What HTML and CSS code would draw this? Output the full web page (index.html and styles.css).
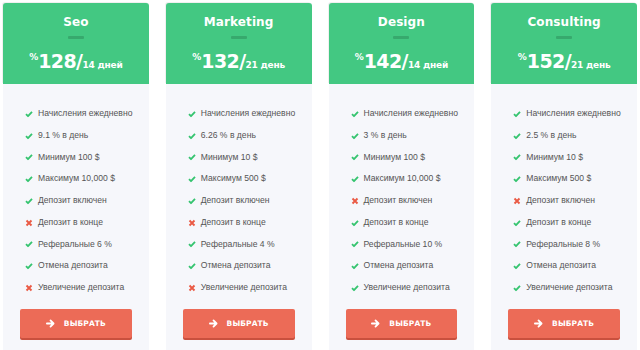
FILE: index.html
```html
<!DOCTYPE html>
<html>
<head>
<meta charset="utf-8">
<link rel="stylesheet" href="styles.css">
</head>
<body>
<div class="plans">
  <div class="card">
    <div class="head">
      <div class="title">Seo</div>
      <div class="bar"></div>
      <div class="price"><span class="pct">%</span><span class="num">128/</span><span class="per">14 дней</span></div>
    </div>
    <ul class="list">
      <li class="yes">Начисления ежедневно</li>
      <li class="yes">9.1 % в день</li>
      <li class="yes">Минимум 100 $</li>
      <li class="yes">Максимум 10,000 $</li>
      <li class="yes">Депозит включен</li>
      <li class="no">Депозит в конце</li>
      <li class="yes">Реферальные 6 %</li>
      <li class="yes">Отмена депозита</li>
      <li class="no">Увеличение депозита</li>
    </ul>
    <div class="foot"><button class="btn"><svg viewBox="0 0 10 10" width="9" height="9"><path d="M1 5h7M5 1.6 8.4 5 5 8.4" fill="none" stroke="#fff" stroke-width="2" stroke-linecap="round" stroke-linejoin="round"/></svg>ВЫБРАТЬ</button></div>
  </div>
  <div class="card">
    <div class="head">
      <div class="title">Marketing</div>
      <div class="bar"></div>
      <div class="price"><span class="pct">%</span><span class="num">132/</span><span class="per">21 день</span></div>
    </div>
    <ul class="list">
      <li class="yes">Начисления ежедневно</li>
      <li class="yes">6.26 % в день</li>
      <li class="yes">Минимум 10 $</li>
      <li class="yes">Максимум 500 $</li>
      <li class="yes">Депозит включен</li>
      <li class="no">Депозит в конце</li>
      <li class="yes">Реферальные 4 %</li>
      <li class="yes">Отмена депозита</li>
      <li class="no">Увеличение депозита</li>
    </ul>
    <div class="foot"><button class="btn"><svg viewBox="0 0 10 10" width="9" height="9"><path d="M1 5h7M5 1.6 8.4 5 5 8.4" fill="none" stroke="#fff" stroke-width="2" stroke-linecap="round" stroke-linejoin="round"/></svg>ВЫБРАТЬ</button></div>
  </div>
  <div class="card">
    <div class="head">
      <div class="title">Design</div>
      <div class="bar"></div>
      <div class="price"><span class="pct">%</span><span class="num">142/</span><span class="per">14 дней</span></div>
    </div>
    <ul class="list">
      <li class="yes">Начисления ежедневно</li>
      <li class="yes">3 % в день</li>
      <li class="yes">Минимум 100 $</li>
      <li class="yes">Максимум 10,000 $</li>
      <li class="no">Депозит включен</li>
      <li class="yes">Депозит в конце</li>
      <li class="yes">Реферальные 10 %</li>
      <li class="yes">Отмена депозита</li>
      <li class="yes">Увеличение депозита</li>
    </ul>
    <div class="foot"><button class="btn"><svg viewBox="0 0 10 10" width="9" height="9"><path d="M1 5h7M5 1.6 8.4 5 5 8.4" fill="none" stroke="#fff" stroke-width="2" stroke-linecap="round" stroke-linejoin="round"/></svg>ВЫБРАТЬ</button></div>
  </div>
  <div class="card">
    <div class="head">
      <div class="title">Consulting</div>
      <div class="bar"></div>
      <div class="price"><span class="pct">%</span><span class="num">152/</span><span class="per">21 день</span></div>
    </div>
    <ul class="list">
      <li class="yes">Начисления ежедневно</li>
      <li class="yes">2.5 % в день</li>
      <li class="yes">Минимум 10 $</li>
      <li class="yes">Максимум 500 $</li>
      <li class="no">Депозит включен</li>
      <li class="yes">Депозит в конце</li>
      <li class="yes">Реферальные 8 %</li>
      <li class="yes">Отмена депозита</li>
      <li class="yes">Увеличение депозита</li>
    </ul>
    <div class="foot"><button class="btn"><svg viewBox="0 0 10 10" width="9" height="9"><path d="M1 5h7M5 1.6 8.4 5 5 8.4" fill="none" stroke="#fff" stroke-width="2" stroke-linecap="round" stroke-linejoin="round"/></svg>ВЫБРАТЬ</button></div>
  </div>
</div>
</body>
</html>
```
FILE: styles.css
```css
html, body { margin: 0; padding: 0; background: #fff; }
body { width: 640px; height: 350px; overflow: hidden; }
.plans {
  display: grid;
  grid-template-columns: repeat(4, 1fr);
  column-gap: 17px;
  padding: 3px 3px 0 3px;
}
.card {
  background: #f6f7fb;
  height: 347px;
  display: flex;
  flex-direction: column;
}
.head {
  background: #43c882;
  border-radius: 3px 3px 0 0;
  height: 81px;
  box-sizing: border-box;
  padding-top: 11px;
  text-align: center;
  color: #fff;
  box-shadow: -1px -1px 0 rgba(0,0,0,0.06);
}
.title {
  font-family: "DejaVu Sans", sans-serif;
  font-weight: bold;
  font-size: 12px;
  line-height: 16px;
  letter-spacing: 0.1px;
}
.bar {
  width: 16px;
  height: 3px;
  background: #37a96d;
  margin: 6px auto 0;
  border-radius: 1px;
}
.price {
  margin-top: 6px;
  font-family: "DejaVu Sans", sans-serif;
  font-weight: bold;
  line-height: 24px;
  white-space: nowrap;
}
.pct { font-size: 9px; vertical-align: 8px; }
.num { font-size: 19px; letter-spacing: -0.6px; }
.per { font-size: 9px; letter-spacing: -0.2px; }
.list {
  list-style: none;
  margin: 0;
  padding: 19px 0 0 22px;
  font-family: "Liberation Sans", Arial, sans-serif;
  font-size: 8.6px;
  color: #555;
}
.list li {
  height: 21.75px;
  line-height: 21.75px;
  display: flex;
  align-items: center;
}
.list li::before {
  content: "";
  width: 8px;
  height: 8px;
  margin-right: 5px;
  background-repeat: no-repeat;
  background-size: 8px 8px;
}
.list li.yes::before {
  background-image: url("data:image/svg+xml,%3Csvg xmlns='http://www.w3.org/2000/svg' viewBox='0 0 8 8'%3E%3Cpath d='M1 4.2 3 6.2 7 1.8' fill='none' stroke='%2335c46f' stroke-width='1.8' stroke-linejoin='round'/%3E%3C/svg%3E");
}
.list li.no::before {
  background-image: url("data:image/svg+xml,%3Csvg xmlns='http://www.w3.org/2000/svg' viewBox='0 0 8 8'%3E%3Cpath d='M1.5 1.5 6.5 6.5M6.5 1.5 1.5 6.5' fill='none' stroke='%23ea5a44' stroke-width='1.9'/%3E%3C/svg%3E");
}
.foot {
  padding: 10px 17px 0 17px;
}
.btn {
  width: 100%;
  height: 29px;
  border: 0;
  border-radius: 2px;
  background: #ec6b57;
  box-shadow: 0 2px 0 #c9503e;
  color: #fff;
  font-family: "DejaVu Sans", sans-serif;
  font-weight: bold;
  font-size: 7.5px;
  letter-spacing: 0.1px;
  display: flex;
  align-items: center;
  justify-content: center;
  gap: 9px;
  padding: 0;
}
```
